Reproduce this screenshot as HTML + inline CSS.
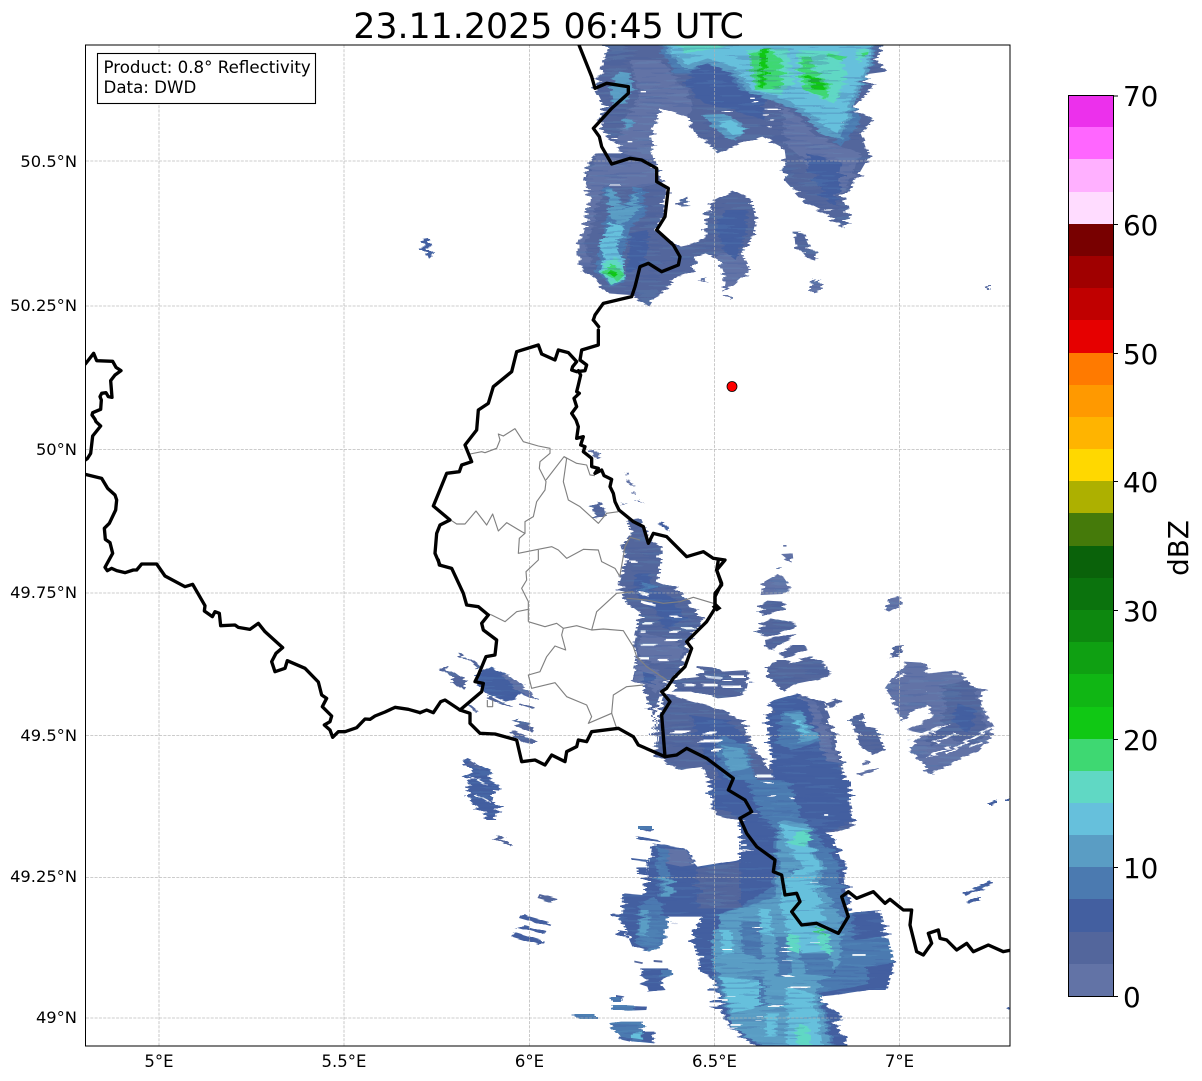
<!DOCTYPE html>
<html><head><meta charset="utf-8"><title>Radar</title>
<style>
html,body{margin:0;padding:0;background:#fff}
svg{display:block}
text{font-family:"DejaVu Sans","Liberation Sans",sans-serif;fill:#000}
.c0{fill:#6273a6}.c1{fill:#53669c}.c2{fill:#435fa0}.c3{fill:#4b7ab0}.c4{fill:#5a9dc4}.c5{fill:#66c0dc}.c6{fill:#60d8c4}.c7{fill:#3ed872}.c8{fill:#10c814}
.w{stroke:#fff;fill:none}
.b{fill:none;stroke:#000;stroke-width:10;stroke-linejoin:round;stroke-linecap:round}
.g{fill:none;stroke:#808080;stroke-width:3.4;stroke-linejoin:round}
.t{font-size:16.67px}
.r{font-size:16.3px;text-anchor:end}
.m{font-size:16.5px;text-anchor:middle}
.cb{font-size:27.8px}
</style></head><body>
<svg width="1202" height="1081" viewBox="0 0 1202 1081" xmlns="http://www.w3.org/2000/svg">
<defs>
<clipPath id="ax"><rect x="85.5" y="45" width="924.5" height="1001"/></clipPath>
<filter id="st" filterUnits="userSpaceOnUse" x="0" y="0" width="1202" height="1081" color-interpolation-filters="sRGB">
<feTurbulence type="fractalNoise" baseFrequency="0.008 0.36" numOctaves="1" seed="4" result="n"/>
<feColorMatrix in="n" type="matrix" values="1 0 0 0 0  0 0 0 0 .5  0 0 0 0 .5  0 0 0 0 1" result="m0"/>
<feComponentTransfer in="m0" result="m"><feFuncR type="discrete" tableValues="0 .1 .2 .35 .45 .55 .65 .8 .9 1"/></feComponentTransfer>
<feDisplacementMap in="SourceGraphic" in2="m" scale="18" xChannelSelector="R" yChannelSelector="G" result="d"/>
<feTurbulence type="fractalNoise" baseFrequency="0.03 0.4" numOctaves="1" seed="11" result="n2"/>
<feColorMatrix in="n2" type="matrix" values="0 0 0 0 .24  0 0 0 0 .35  0 0 0 0 .62  1 0 0 0 0" result="da"/>
<feComponentTransfer in="da" result="dark"><feFuncA type="discrete" tableValues="0 0 0 0 0 0 .24 .24 .24 .24"/></feComponentTransfer>
<feComposite in="dark" in2="d" operator="atop" result="e"/>
<feColorMatrix in="n2" type="matrix" values="0 0 0 0 .42  0 0 0 0 .74  0 0 0 0 .86  0 1 0 0 0" result="li"/>
<feComponentTransfer in="li" result="light"><feFuncA type="discrete" tableValues="0 0 0 0 0 0 .1 .1 .1 .1"/></feComponentTransfer>
<feComposite in="light" in2="e" operator="atop" result="f"/>
<feTurbulence type="fractalNoise" baseFrequency="0.035 0.45" numOctaves="1" seed="23" result="n3"/>
<feColorMatrix in="n3" type="matrix" values="0 0 0 0 1  0 0 0 0 1  0 0 0 0 1  1 0 0 0 0" result="wh"/>
<feComponentTransfer in="wh" result="white"><feFuncA type="discrete" tableValues="0 0 0 0 0 0 0 0 0 0 0 0 0 0 0 0 1 1 1 1"/></feComponentTransfer>
<feComposite in="white" in2="f" operator="atop"/>
</filter>
</defs>
<rect width="1202" height="1081" fill="#fff"/>
<g clip-path="url(#ax)">
<g filter="url(#st)">
<!-- north cluster -->
<g transform="translate(560,40) scale(.33333)">
<path class="c1" d="M145,10L130,60 125,100 100,140 130,200 115,250 140,290 170,310 190,345 150,365 285,370 270,290 305,205 385,230 400,280 480,340 540,310 610,290 665,320 680,425 740,490 800,520 850,565 870,530 850,470 895,410 930,350 905,280 940,240 880,205 940,140 905,105 980,95 950,60 970,10Z"/>
<path class="c0" d="M210,60L300,60 380,150 400,210 385,230 305,205 270,290 285,370 190,345 170,310 200,230 240,170Z"/>
<path class="c0" d="M660,190L800,300 900,340 880,410 840,470 770,400 690,330Z"/>
<path class="c2" d="M400,70L480,70 550,150 620,170 610,240 520,210 430,190 380,140Z"/>
<path class="c2" d="M730,340L850,370 830,500 790,470 760,400Z"/>
<path class="c3" d="M300,10L340,100 390,100 430,60 500,90 540,150 620,170 690,200 780,260 850,320 900,250 880,170 940,70 945,10Z"/>
<path class="c4" d="M310,10L370,90 440,70 515,100 570,160 695,200 795,280 845,300 890,180 938,60 938,10Z"/>
<path class="c5" d="M320,10L380,75 440,55 520,80 580,150 700,185 800,260 840,280 880,170 930,50 930,10Z"/>
<path class="c6" d="M340,10L390,40 470,25 540,10ZM565,30L680,25 700,130 660,165 590,150ZM710,30L830,35 860,100 830,190 770,170 715,130ZM880,30L925,25 900,70Z"/>
<path class="c7" d="M570,42L625,25 665,60 665,145 590,150 575,100Z"/>
<path class="c7" d="M722,50L750,50 760,90 810,140 800,178 730,145 720,100Z"/>
<path class="c7" d="M800,40L860,50 845,62 805,50Z"/>
<path class="c7" d="M900,40L925,35 915,52Z"/>
<path class="c8" d="M603,25L624,25 612,145 596,140Z"/>
<path class="c8" d="M738,105L770,110 802,150 760,148Z"/>
<path class="c4" d="M150,140L175,95 210,100 220,140 200,190 160,195Z"/>
<path class="c4" d="M430,225L500,222 552,258 552,282 510,302 460,265Z"/>
<path class="c5" d="M470,245L510,240 548,265 548,282 515,285Z"/>
<path class="c4" d="M190,235L225,240 210,270 195,260Z"/>
<!-- south-west blob -->
<path class="c1" d="M110,340L85,365 70,430 90,480 75,540 55,610 60,680 100,715 140,760 215,765 265,800 280,775 300,765 355,710 400,695 410,650 440,640 480,660 495,720 490,755 520,735 570,690 545,640 580,590 590,540 575,480 520,452 465,480 440,530 440,590 400,610 355,620 315,590 290,570 310,530 322,440 295,420 285,365 190,340Z"/>
<path class="c0" d="M110,345L285,370 300,430 260,440 130,440 100,540 75,610 100,680 60,680 55,610 75,540 90,480 70,430Z"/>
<path class="c0" d="M470,640L545,640 570,690 520,735 490,755 495,720Z"/>
<path class="c2" d="M490,510L560,510 560,570 530,660 490,630 470,560Z"/>
<path class="c2" d="M210,580L270,570 250,680 200,700Z"/>
<path class="c3" d="M125,445L150,440 195,500 225,440 250,445 258,520 215,560 190,640 195,725 150,740 105,690 130,600 130,540 160,515Z"/>
<path class="c4" d="M140,448L158,448 196,510 228,455 240,505 200,545 185,555 150,535Z"/>
<path class="c5" d="M150,545L195,565 170,620 190,660 195,710 150,730 120,690 135,640 115,620Z"/>
<path class="c6" d="M130,670L165,650 195,690 190,720 150,735 125,700Z"/>
<path class="c7" d="M155,670L195,700 170,725 130,700Z"/>
<path class="c8" d="M155,690L175,698 160,712 145,700Z"/>
<path class="c1" d="M365,480L385,470 388,498 360,500Z"/>
<path class="c1" d="M425,515L445,510 445,528 425,525Z"/>
<path class="c1" d="M705,575L730,575 760,640 758,662 735,655 710,625Z"/>
<path class="c0" d="M760,715L778,730 785,745 755,760 750,745Z"/>
<path class="c0" d="M430,715L442,712 442,728 430,725Z"/>
<path class="w" stroke-width="4" d="M245,155h16M578,175h14M578,185h14M606,208h40M616,225h14M628,240h10M628,260h10M604,305h16M800,510h20M200,305h14"/>
</g>
<!-- isolated echoes (true px) -->
<path class="c2" d="M421,239L427,238 433,254 428,259 424,248Z"/>
<path class="c0" d="M811,289L820,279 822,290 813,293Z"/>
<path class="c0" d="M725,295L731,295 730,300Z"/>
<path class="c0" d="M987,285L990,285 990,290 988,290Z"/>
<!-- middle strip, west echoes -->
<g transform="translate(420,330) scale(.33333)">
<path class="c0" d="M520,362L538,360 543,382 528,388Z"/>
<path class="c0" d="M617,428l6,0 2,8 -6,0ZM622,448l8,4 14,16 -6,2 -16,-14ZM638,483l8,6 -2,6 -8,-6ZM661,508l8,8 -2,4 -8,-8ZM600,517l8,6 -2,4 -8,-6Z"/>
<path class="c1" d="M512,530L535,515 548,530 552,550 560,560 535,565 515,545Z"/>
<path class="c2" d="M720,575L735,578 742,605 722,590Z"/>
</g>
<g transform="translate(420,560) scale(.33333)">
<path class="c1" d="M620,-120L660,-125 690,-60 725,-40 725,0 715,65 780,90 850,190 805,240 790,310 745,365 725,400 700,465 705,480 708,570 735,595 708,590 700,480 670,375 635,360 650,290 640,250 660,160 620,130 595,70 620,0 605,-40 635,-80Z"/>
<path class="c0" d="M655,290L700,330 735,360 715,400 680,375 638,360Z"/>
<path class="c0" d="M660,215L780,250 785,300 700,310 650,280Z"/>
<path class="c2" d="M650,40L690,40 705,90 760,110 790,180 740,210 700,150 640,90Z"/>
<path class="c3" d="M670,65L700,75 690,95 665,90Z"/>
<path class="c2" d="M665,335L700,345 700,375 670,365Z"/>
<path class="w" stroke-width="7" d="M650,95l40,12M660,125l50,12M670,190h30M730,240h40M665,255h45M720,300h30M660,295h30M745,170h25M755,215h25M630,5h20M665,215l15,0M790,205h35"/>
<!-- east of strip -->
<path class="c1" d="M833,318L880,322 905,335 980,330 985,345 975,400 945,410 890,415 830,395 770,395 755,365 780,355 830,350Z"/>
<path class="w" stroke-width="8" d="M850,350l50,5M790,375h30M845,375h45M900,380h60M830,335h15M930,350h45"/>
<!-- west echoes -->
<path class="c1" d="M118,280L125,278 182,322 175,328Z"/>
<path class="c1" d="M72,322L80,318 145,365 130,390 108,370 90,345Z"/>
<path class="c2" d="M170,345L212,320 250,340 345,412 350,420 300,400 285,418 260,425 200,400 175,375Z"/>
<path class="c0" d="M250,345L265,342 345,412 340,418 280,385Z"/>
<path class="c1" d="M205,405l60,30 8,5 -10,0 -60,-25ZM150,430l30,25 -4,4 -30,-24ZM302,430l35,12 -3,5 -35,-11Z"/>
<path class="c1" d="M288,484L298,476 348,505 340,518 295,500Z"/>
<path class="c1" d="M270,516L280,510 350,545 345,552 300,545Z"/>
<path class="c2" d="M132,598L140,594 215,632 205,660 245,680 240,692 222,690 215,720 240,745 230,755 225,780 195,780 200,770 145,720 150,710 138,680 150,675 128,650 160,635Z"/>
<path class="c1" d="M155,600l30,20 -8,10 -25,-15Z"/>
<path class="w" stroke-width="4" d="M150,650l50,25M170,705l40,22"/>
</g>
<g transform="translate(440,640) scale(.33333)">
<path class="c1" d="M165,590l8,-5 40,28 -4,6 -44,-24Z"/>
</g>
<!-- band between the strip and the south cluster (true px) -->
<path class="c1" d="M665,693L687,700 723,710 743,722 752,745 770,770 772,745 768,715 790,697 810,696 823,702 832,725 845,780 855,825 835,832 800,835 715,815 710,787 703,767 680,770 665,760 656,757 657,720Z"/>
<path class="c2" d="M690,715L725,720 745,735 755,780 800,790 845,790 850,825 800,830 730,815 716,770 700,745Z"/>
<path class="c3" d="M716,735L748,745 755,780 735,795 720,770Z"/>
<path class="c4" d="M722,745L745,750 750,768 730,772Z"/>
<path class="c3" d="M770,790L810,795 830,825 780,825Z"/>
<path class="w" stroke-width="3" d="M672,732h16M698,741h22M712,750l8,0M756,776h18M778,774h10M708,733h10"/>
<!-- east blobs -->
<g transform="translate(750,530) scale(.33333)">
<path class="c0" d="M92,45h10v5h-10ZM90,72L125,70 128,98 112,90Z"/>
<path class="c0" d="M82,112h10v5h-10Z"/>
<path class="c0" d="M40,155L80,132 100,145 120,175 100,192 35,195Z"/>
<path class="c1" d="M28,228L55,212 105,215 100,240 40,258Z"/>
<path class="c1" d="M32,280L65,265 135,280 130,295 60,320 25,315Z"/>
<path class="c1" d="M42,330L130,312 142,320 80,345 65,362 45,350Z"/>
<path class="c1" d="M88,375L120,345 155,345 170,358 110,385Z"/>
<path class="c1" d="M75,390L105,390 125,400 185,378 240,410 242,440 140,460 100,485 75,460 50,440 55,420Z"/>
<path class="c1" d="M222,520L265,505 270,515 235,535Z"/>
<path class="c2" d="M45,520L150,490 195,520 230,590 265,700 300,800 70,800 65,700 50,560 80,545Z"/>
<path class="c0" d="M150,490L195,520 230,590 265,700 225,695 190,560Z"/>
<path class="c3" d="M100,545L155,540 210,630 180,645 130,660 80,640Z"/>
<path class="c4" d="M105,550L155,545 205,625 150,640 140,575Z"/>
<path class="c5" d="M142,570L160,572 170,600 180,605 155,615Z"/>
<path class="c0" d="M405,238L418,205 452,198 450,228 420,245Z"/>
<path class="c1" d="M415,385L438,348 465,345 452,372Z"/>
<path class="c1" d="M305,560L335,548 350,590 378,595 405,660 370,675 325,640Z"/>
<path class="c0" d="M332,695l20,-5 3,12 -20,4ZM322,730l60,-16 3,6 -60,18Z"/>
<path class="c0" d="M405,478L435,435 470,395 522,398 530,430 625,422 665,470 698,480 690,520 730,590 722,625 682,665 640,680 545,735 520,700 475,660 520,610 470,600 530,570 555,555 530,525 490,545 460,575 430,515Z"/>
<path class="c1" d="M570,470L660,450 690,520 710,610 670,650 590,620 540,650 530,620 570,590 590,540Z"/>
<path class="c2" d="M620,520L680,540 660,610 610,580Z"/>
<path class="w" stroke-width="6" d="M555,640L610,610M590,670L640,640M530,680L600,650M480,630L570,590M640,640L730,590M440,445l20,-15M545,610l40,-25M660,650l30,-12"/>
<path class="c2" d="M0,455h10v3h-10Z"/>
</g>
<!-- small east/south specks -->
<g transform="translate(600,780) scale(.33333)">
<path class="c2" d="M1170,70l24,-12 -2,8 -22,12Z"/>
<path class="c2" d="M1095,340L1170,305 1175,312 1100,348Z"/>
<path class="c2" d="M1107,362l30,-12 -2,6 -28,12Z"/>
<path class="c2" d="M1222,55l12,-8 0,10Z"/>
<path class="c2" d="M1215,685l15,-5 0,10Z"/>
<!-- main south cluster -->
<path class="c2" d="M330,0L750,0 750,85 765,120 680,155 710,180 730,240 745,340 750,400 840,390 860,470 885,560 870,590 810,630 745,640 650,650 725,710 700,730 735,770 740,800 465,800 395,745 360,690 360,650 335,590 305,580 280,480 285,430 310,410 200,410 195,490 155,515 100,500 65,420 70,340 130,345 155,190 250,205 300,260 420,240 420,100 380,95 335,80Z"/>
<path class="c1" d="M290,268L420,245 420,385 295,385Z"/>
<path class="c0" d="M190,205L250,210 290,255 250,260 205,250Z"/>
<path class="c3" d="M120,370L170,350 200,410 195,490 155,515 110,490Z"/>
<path class="c3" d="M170,200L200,210 215,350 175,350Z"/>
<path class="c4" d="M190,290L215,295 212,350 185,350Z"/>
<path class="c4" d="M125,390L150,390 140,470 115,465Z"/>
<path class="c3" d="M365,400L420,380 520,320 530,150 480,100 440,0 560,0 620,130 700,210 730,330 745,400 840,395 880,540 810,610 660,640 700,795 480,795 380,700 340,580 340,470Z"/>
<path class="c2" d="M420,430L470,425 480,540 430,520Z"/>
<path class="c2" d="M570,270L650,280 660,350 620,370 590,340Z"/>
<path class="c2" d="M760,400L840,395 860,470 760,480Z"/>
<path class="c2" d="M800,560L880,550 860,630 810,630Z"/>
<path class="c2" d="M620,520L690,520 700,580 640,590Z"/>
<path class="c2" d="M460,590L490,590 500,680 460,680Z"/>
<path class="c4" d="M365,400L420,385 530,350 540,120 620,130 660,240 680,340 730,420 720,540 650,625 690,795 480,795 395,740 360,590 335,540 340,470Z"/>
<path class="c3" d="M420,425L480,425 490,540 430,520Z"/>
<path class="c3" d="M570,265L650,280 660,360 590,350Z"/>
<path class="c3" d="M600,520L690,520 695,590 610,580Z"/>
<path class="c3" d="M460,590L490,590 500,680 460,680Z"/>
<path class="c3" d="M530,470L560,470 570,590 530,590Z"/>
<path class="c5" d="M365,450L395,450 400,520 368,525Z"/>
<path class="c5" d="M478,385L510,388 520,470 485,460Z"/>
<path class="c5" d="M535,130L630,150 650,240 655,340 680,450 695,510 610,520 570,460 540,370 560,300 600,260 570,190Z"/>
<path class="c5" d="M362,590L480,600 480,680 395,700Z"/>
<path class="c5" d="M495,700L530,700 530,770 500,770Z"/>
<path class="c5" d="M560,620L640,640 665,795 560,795Z"/>
<path class="c6" d="M600,150L630,150 640,190 630,200 575,190Z"/>
<path class="c6" d="M660,440L690,470 695,525 665,510 650,460Z"/>
<path class="c6" d="M560,460L600,470 600,520 570,510Z"/>
<path class="c6" d="M590,730L630,745 630,795 590,795Z"/>
<path class="c7" d="M650,438l25,15 -5,15 -15,-15Z"/>
<path class="w" stroke-width="5" d="M497,8h22M505,48h16M575,55h12M680,105h12M425,195h18M425,210h20M300,420h-15M210,430h20M205,455h15M275,530h30M550,588h28M350,660h30M520,678h35M555,622h60M395,735h30M420,745h-30M760,525h40"/>
<path class="c1" d="M100,542l26,5 -2,5 -24,-5ZM158,540l26,2 0,6 -26,-2Z"/>
<path class="c2" d="M124,565L212,565 210,590 180,605 200,630 150,635 145,620 115,610 150,600 120,585Z"/>
<path class="c3" d="M180,570h32v20h-32Z"/>
<path class="c3" d="M60,725L132,725 132,770 160,755 155,790 100,785 60,770 25,730Z"/>
<path class="c5" d="M95,760l28,-5 3,24 -30,-5Z"/>
<path class="c2" d="M60,770l35,5 -2,10 -35,-8ZM125,755l35,0 -2,35 -30,-5Z"/>
<path class="c2" d="M45,645l30,5 -5,8 -25,-5ZM38,675l100,5 -2,10 -50,2 -48,-8Z"/>
<path class="c3" d="M70,675l35,2 -5,15 -30,0Z"/>
<path class="c2" d="M118,140l15,3 25,8 -3,4 -37,-6ZM110,168l72,12 -5,6 -65,-10Z"/>
<path class="c2" d="M96,234l50,6 -2,6 -46,-6ZM112,262l30,0 -2,25 -26,-5Z"/>
<path class="c2" d="M40,400l30,5 -5,15 -25,-8ZM50,450l30,5 0,20 -25,-8Z"/>
<path class="c2" d="M330,625h30v7h-30ZM332,660h30v7h-30ZM335,680h25v7h-25Z"/>
</g>
<!-- lower-left specks -->
<path class="c1" d="M537,894l18,5 -2,4 -18,-5Z"/>
<path class="c2" d="M522,914l28,8 -2,4 -28,-8ZM514,932l26,8 -2,5 -26,-8ZM522,925l22,6 -2,3 -22,-6Z"/>
<path class="c3" d="M577,1014h20v5h-20Z"/>
<path class="c3" d="M612,997h10v5h-10ZM612,1005h16v5h-16Z"/>
<path class="c3" d="M639,826h14v4h-14Z"/>
<path class="c2" d="M965,892l26,-12 1,3 -26,12ZM970,901l10,-4 0,3 -10,4Z"/>
<path class="c2" d="M990,803l8,-3 0,3 -8,3ZM1006,798h4v3h-4Z"/>
</g>
</g>
<!-- gridlines -->
<g stroke="#b0b0b0" stroke-width=".8" stroke-dasharray="3 1.3" fill="none" opacity=".85">
<path d="M159,45V1046M344,45V1046M529.5,45V1046M714.5,45V1046M899.5,45V1046"/>
<path d="M86,161H1010M86,306H1010M86,449.5H1010M86,593H1010M86,735.5H1010M86,877.5H1010M86,1018H1010"/>
</g>
<g clip-path="url(#ax)">
<!-- admin borders -->
<g transform="translate(420,330) scale(.33333)">
<path class="g" d="M150,372L185,365 195,368 230,355 240,330 235,312 250,318 285,296 310,335 355,348 390,355 390,370 360,395 358,415 378,455 375,480 350,515 340,560 315,575 315,610"/>
<path class="g" d="M95,572L110,582 135,582 168,543 200,585 218,552 235,603 260,578 305,605 315,610 298,625 295,670 355,658 395,650 415,660 440,685 490,658 535,660 545,695 585,715 600,740"/>
<path class="g" d="M378,450L432,380 440,385 430,455 445,510 480,530 535,580 560,550 595,545"/>
<path class="g" d="M432,380L470,400 500,405 510,435 525,437"/>
<path class="g" d="M600,735L615,650 630,622 660,630"/>
</g>
<g transform="translate(420,560) scale(.33333)">
<path class="g" d="M355,-30L355,0 318,35 320,60 305,85 325,125 325,185"/>
<path class="g" d="M200,160L215,165 255,185 290,155 325,148"/>
<path class="g" d="M325,185L375,200 410,190 430,205 470,197 515,210 550,207 610,212 640,260 650,290 680,320 740,360"/>
<path class="g" d="M430,205L425,225 437,270 405,258 380,290 360,335 325,345 335,385 405,368 440,410 500,435 515,470 505,490 575,460 590,505"/>
<path class="g" d="M515,210L530,155 590,100 640,95"/>
<path class="g" d="M575,460L580,405 620,380 670,375"/>
<path class="g" d="M620,115L680,120 730,130 780,125 820,112 880,130"/>
<path class="g" d="M202,420V440H218V420"/>
</g>
<!-- national borders -->
<g transform="translate(70,340) scale(.33333)">
<path class="b" d="M46,72L71,40 80,62 128,64 138,82 153,92 135,105 122,122 126,172 115,170 108,158 95,160 90,170 94,180 92,208 68,218 66,225 75,238 78,245 92,258 68,288 62,340 52,356 46,360"/>
<path class="b" d="M46,403L95,415 113,445 135,465 140,480 137,510 118,550 103,565 106,598 120,608 128,640 105,682 112,692 125,685 140,692 165,698 190,690 200,690 215,672 260,672 285,708 345,740 368,733 405,797 403,813 427,830 435,815 448,820 452,857 495,855 505,862 540,868 565,850 585,875 638,923 618,940 605,965 615,995 645,985 652,962 705,985 745,1026 755,1065 770,1075 757,1100 785,1128 780,1145 763,1155 780,1170 788,1192 805,1175 825,1175 860,1163 885,1137 900,1138 915,1128 945,1116 975,1102 1015,1108 1050,1118"/>
</g>
<g transform="translate(420,560) scale(.33333)">
<path class="b" d="M0,458L20,450 40,458 62,425 75,420 120,450 185,395 190,370 165,365 175,345 198,290 225,285 230,240 190,210 185,190 205,165 175,140 140,135 130,100 95,25 58,15 55,0"/>
<path class="b" d="M120,450L150,460 150,490 180,520 225,522 290,540 305,605 345,600 375,615 395,585 435,605 440,575 470,560 475,540 500,545 515,515 595,505 640,530 655,555 735,590 770,585 800,565 860,595 940,655 925,690 975,720 995,755 960,775"/>
<path class="b" d="M895,0L890,30 905,75 885,100 885,145 860,185 835,210 800,245 815,265 795,320 760,355 740,385 725,395 750,425 725,465 735,590"/>
<path d="M875,140L890,130 905,145 890,155Z" fill="#000"/>
</g>
<g transform="translate(420,330) scale(.33333)">
<path class="b" d="M60,705L45,670 50,610 60,585 90,570 40,528 80,430 118,425 125,405 155,395 135,345 170,300 175,240 205,220 220,170 275,125 290,65 355,45 365,72 405,90 415,60 445,68 470,95 458,110 455,120 470,125 495,122 500,105 480,90 485,60 535,45 535,0"/>
<path class="b" d="M475,122L482,135 475,165 470,185 478,190 462,205 470,230 455,250 468,270 475,290 470,325 490,320 482,345 495,350 490,365 515,385 515,410 535,415 525,430 545,420 552,437 575,448 570,470 580,490 585,515 597,540 640,575 670,590 685,640 700,610 740,620 800,680 850,665 880,685 915,690 890,720 905,760 885,800 885,825"/>
</g>
<g transform="translate(560,40) scale(.33333)">
<path class="b" d="M100,840L105,825 130,790 215,770 225,740 240,680 265,670 305,695 355,675 360,650 340,615 290,570 315,530 325,445 290,425 290,385 245,360 210,355 155,372 125,320 118,290 100,265 155,205 205,160 205,140 140,130 105,145 95,110 55,10"/>
<path class="b" d="M116,860L100,840"/>
</g>
<g transform="translate(600,780) scale(.33333)">
<path class="b" d="M420,115L440,160 470,200 525,240 520,275 545,285 555,345 590,340 600,365 575,395 605,435 650,430 715,460 745,410 725,350 745,335 770,355 820,335 855,370 870,358 910,390 935,390 930,435 950,515 970,525 995,490 985,460 1015,450 1020,475 1040,480 1070,510 1100,490 1120,515 1165,495 1210,515 1235,510"/>
</g>
<circle cx="732" cy="386.5" r="5" fill="#ff0000" stroke="#000" stroke-width=".8"/>
</g>
<rect x="85.5" y="45" width="924.5" height="1001" fill="none" stroke="#000" stroke-width="1"/>
<!-- info box -->
<rect x="97.5" y="53.5" width="218" height="50" fill="#fff" stroke="#000" stroke-width="1.1"/>
<text class="t" x="103.5" y="73">Product: 0.8° Reflectivity</text>
<text class="t" x="103.5" y="93">Data: DWD</text>
<!-- title -->
<text x="548.5" y="38" font-size="34.8" text-anchor="middle">23.11.2025 06:45 UTC</text>
<!-- axis labels -->
<text class="r" x="77" y="167">50.5°N</text>
<text class="r" x="77" y="311">50.25°N</text>
<text class="r" x="77" y="455">50°N</text>
<text class="r" x="77" y="598">49.75°N</text>
<text class="r" x="77" y="741">49.5°N</text>
<text class="r" x="77" y="882">49.25°N</text>
<text class="r" x="77" y="1023">49°N</text>
<text class="m" x="159" y="1067">5°E</text>
<text class="m" x="344" y="1067">5.5°E</text>
<text class="m" x="529.5" y="1067">6°E</text>
<text class="m" x="714.5" y="1067">6.5°E</text>
<text class="m" x="899.5" y="1067">7°E</text>
<!-- colorbar -->
<g shape-rendering="crispEdges">
<rect x="1068" y="95" width="45" height="32.2" fill="#ec30ec"/>
<rect x="1068" y="127" width="45" height="32.2" fill="#ff66ff"/>
<rect x="1068" y="159" width="45" height="33" fill="#ffb0ff"/>
<rect x="1068" y="192" width="45" height="32" fill="#ffdcff"/>
<rect x="1068" y="224" width="45" height="32" fill="#780000"/>
<rect x="1068" y="256" width="45" height="32" fill="#a00000"/>
<rect x="1068" y="288" width="45" height="32" fill="#c00000"/>
<rect x="1068" y="320" width="45" height="33" fill="#e60000"/>
<rect x="1068" y="353" width="45" height="32" fill="#ff7a00"/>
<rect x="1068" y="385" width="45" height="32" fill="#ff9900"/>
<rect x="1068" y="417" width="45" height="32" fill="#ffb400"/>
<rect x="1068" y="449" width="45" height="32" fill="#ffd800"/>
<rect x="1068" y="481" width="45" height="32" fill="#adb000"/>
<rect x="1068" y="513" width="45" height="33" fill="#457a0a"/>
<rect x="1068" y="546" width="45" height="32" fill="#0a620a"/>
<rect x="1068" y="578" width="45" height="32" fill="#0b730d"/>
<rect x="1068" y="610" width="45" height="32" fill="#0d880f"/>
<rect x="1068" y="642" width="45" height="32" fill="#0fa012"/>
<rect x="1068" y="674" width="45" height="33" fill="#10b614"/>
<rect x="1068" y="707" width="45" height="32" fill="#10c814"/>
<rect x="1068" y="739" width="45" height="32" fill="#3ed872"/>
<rect x="1068" y="771" width="45" height="32" fill="#60d8c4"/>
<rect x="1068" y="803" width="45" height="32" fill="#66c0dc"/>
<rect x="1068" y="835" width="45" height="32" fill="#5a9dc4"/>
<rect x="1068" y="867" width="45" height="32" fill="#4b7ab0"/>
<rect x="1068" y="899" width="45" height="33" fill="#435fa0"/>
<rect x="1068" y="932" width="45" height="32" fill="#53669c"/>
<rect x="1068" y="964" width="45" height="32" fill="#6273a6"/>
</g>
<rect x="1068.5" y="95.5" width="45" height="901" fill="none" stroke="#000" stroke-width="1"/>
<path d="M1113,96h5M1113,224.500h5M1113,353.500h5M1113,481.500h5M1113,610.500h5M1113,739.500h5M1113,867.500h5M1113,996.500h5" stroke="#000" stroke-width="1"/>
<text class="cb" x="1123" y="106">70</text>
<text class="cb" x="1123" y="235">60</text>
<text class="cb" x="1123" y="364">50</text>
<text class="cb" x="1123" y="492">40</text>
<text class="cb" x="1123" y="621">30</text>
<text class="cb" x="1123" y="750">20</text>
<text class="cb" x="1123" y="878">10</text>
<text class="cb" x="1123" y="1007">0</text>
<text class="cb" transform="translate(1188,548) rotate(-90)" text-anchor="middle">dBZ</text>
</svg>
</body></html>
